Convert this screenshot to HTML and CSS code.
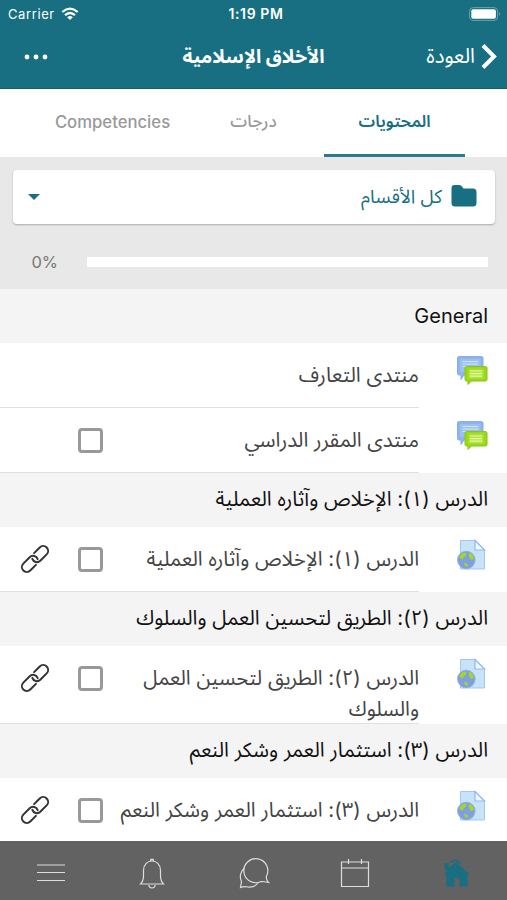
FILE: index.html
```html
<!DOCTYPE html>
<html lang="ar" dir="rtl">
<head>
<meta charset="utf-8">
<meta name="viewport" content="width=device-width, initial-scale=1">
<title>الأخلاق الإسلامية</title>
<link rel="stylesheet" href="styles.css">
</head>
<body>
<svg width="0" height="0" class="defs" aria-hidden="true">
  <defs>
    <symbol id="forum" viewBox="0 0 32 32">
      <path d="M3 1.500H25.500Q27 1.500 27 3V18.500Q27 20 25.500 20H8L5 24.500V20H3Q1.500 20 1.500 18.500V3Q1.500 1.500 3 1.500Z" fill="#8db4ed" stroke="#86aee9"/>
      <path d="M4 4H24.500V17H4Z" fill="#9dc0f3"/>
      <path d="M6.500 6.500H22M6.500 9H22M6.500 11.500H22" stroke="#d5e6ff" stroke-width="1.200"/>
      <path d="M10.500 11.500H29.500Q31 11.500 31 13V24.500Q31 26 29.500 26H15.500L12 29.500V26H10.500Q9 26 9 24.500V13Q9 11.500 10.500 11.500Z" fill="#9bd818" stroke="#84c61b"/>
      <path d="M12.500 14H27.500V23.500H12.500Z" fill="#b4e341" stroke="#a6dd26"/>
      <path d="M14 16H26M14 18.600H26M14 21.200H26" stroke="#e4f7a8" stroke-width="1.200"/>
    </symbol>
    <symbol id="webpage" viewBox="0 0 32 32">
      <path d="M4.500 1.500H19L28.500 11V30H4.500Z" fill="#c8e2fa" stroke="#a4c6f5"/>
      <path d="M19 1.500V11H28.500Z" fill="#f0f8ff" stroke="#92b8f2" stroke-width="1.200"/>
      <circle cx="10.300" cy="21" r="8.900" fill="#7e9fe0" stroke="#96afe3" stroke-width=".6"/>
      <path d="M3.500 17.500Q6.500 12.500 10.500 14L9.500 17L7.500 18.500L7 20.500L4 19.500ZM13 13.500L16.500 15.500L18 20L15 21L13 18ZM8 23.500L12 25L11.500 28L9 27Z" fill="#a6d91d"/>
    </symbol>
    <symbol id="link" viewBox="0 0 32 32">
      <g transform="rotate(-45 16 16)" fill="none" stroke="currentColor" stroke-width="2" stroke-linecap="round">
        <path d="M12.500 20.800H4.500A4.900 4.900 0 0 1 4.500 11H13.500A4.900 4.900 0 0 1 17.800 18"/>
        <path d="M19.500 11.200H27.500A4.900 4.900 0 0 1 27.500 21H18.500A4.900 4.900 0 0 1 14.200 14"/>
      </g>
    </symbol>
  </defs>
</svg>
<header class="top">
  <div class="status" dir="ltr">
    <span class="carrier">Carrier
      <svg width="18" height="14" viewBox="0 0 18 14"><g fill="none" stroke="#fff" stroke-width="2.200"><path d="M1.300 5Q9-1.800 16.700 5"/><path d="M4 8.200Q9 3.800 14 8.200"/></g><path d="M6.200 10.200Q9 7.900 11.800 10.200L9 13Z" fill="#fff"/></svg>
    </span>
    <span class="time">1:19 PM</span>
    <svg class="battery" width="32" height="14" viewBox="0 0 32 14"><rect x=".6" y=".6" width="28" height="12.800" rx="3.600" fill="none" stroke="#6ba3ad"/><rect x="2.300" y="2.300" width="24.600" height="9.400" rx="2" fill="#fff"/><path d="M30 5Q32 7 30 9Z" fill="#6ba3ad"/></svg>
  </div>
  <nav class="titlebar">
    <div class="back"><svg width="17" height="27" viewBox="0 0 17 27"><path d="M2 2.500L13 13.500L2 24.500" fill="none" stroke="#fff" stroke-width="4"/></svg><span>العودة</span></div>
    <h1>الأخلاق الإسلامية</h1>
    <svg class="more" width="24" height="6" viewBox="0 0 24 6" fill="#fff"><circle cx="3" cy="3" r="2.400"/><circle cx="12" cy="3" r="2.400"/><circle cx="21" cy="3" r="2.400"/></svg>
  </nav>
</header>
<nav class="tabs">
  <span class="tab active">المحتويات</span>
  <span class="tab">درجات</span>
  <span class="tab latin">Competencies</span>
</nav>
<section class="controls">
  <div class="select">
    <svg width="26" height="22" viewBox="0 0 26 22"><path d="M3.500 0H8.500Q10 0 11 1.500L12.500 3.500H22Q25.500 3.500 25.500 7V18Q25.500 21.500 22 21.500H4Q.5 21.500 .5 18V3Q.5 0 3.500 0Z" fill="#176f81"/></svg>
    <span class="select-label">كل الأقسام</span>
    <i class="caret"></i>
  </div>
  <div class="progress"><div class="track"></div><span class="percent" dir="ltr">0%</span></div>
</section>
<main>
  <h2 class="latin">General</h2>
  <div class="row"><svg class="mod"><use href="#forum"/></svg><div class="cell"><p class="wide">منتدى التعارف</p></div></div>
  <div class="row"><svg class="mod"><use href="#forum"/></svg><div class="cell"><p>منتدى المقرر الدراسي</p><i class="check"></i></div></div>
  <h2>الدرس (١): الإخلاص وآثاره العملية</h2>
  <div class="row"><svg class="mod"><use href="#webpage"/></svg><div class="cell"><p>الدرس (١): الإخلاص وآثاره العملية</p><i class="check"></i><svg class="link"><use href="#link"/></svg></div></div>
  <h2>الدرس (٢): الطريق لتحسين العمل والسلوك</h2>
  <div class="row tall"><svg class="mod"><use href="#webpage"/></svg><div class="cell"><p>الدرس (٢): الطريق لتحسين العمل<br>والسلوك</p><i class="check"></i><svg class="link"><use href="#link"/></svg></div></div>
  <h2>الدرس (٣): استثمار العمر وشكر النعم</h2>
  <div class="row last"><svg class="mod"><use href="#webpage"/></svg><div class="cell"><p>الدرس (٣): استثمار العمر وشكر النعم</p><i class="check"></i><svg class="link"><use href="#link"/></svg></div></div>
</main>
<footer class="tabbar">
  <svg viewBox="0 0 32 32" class="home"><path d="M16 5L29 17L27.500 18.500V29.500H19.500V21H14.500V29.500H6.500V18.500L4 17.500L7 13.500L4.500 12V6H8.500V11Z"/><path d="M10.500 5.500L14.500 3L18 4.500L21 7" class="smoke"/></svg>
  <svg viewBox="0 0 32 32"><path d="M2.500 5H29.500V29.500H2.500ZM2.500 11H29.500M9.500 2V7M22.500 2V7"/></svg>
  <svg viewBox="0 0 32 32"><path d="M28.300 19.500A12 12 0 1 0 23 24.500Q26 24.600 30.500 25.500Q28 23 28.300 19.500Z"/><path d="M6.500 11A11 11 0 0 0 3.500 24.500L2.500 30.500Q6 29 10 30Q16 31 20 26"/></svg>
  <svg viewBox="0 0 32 32"><path d="M4.500 27H27.500Q24.500 24 24.500 19V13A8.500 9 0 0 0 7.500 13V19Q7.500 24 4.500 27ZM14.500 4V3Q16 1.500 17.500 3V4M12.800 28Q13.300 31 16 31T19.200 28"/></svg>
  <svg viewBox="0 0 32 32"><path d="M2 8H30M2 15.500H30M2 23.500H30"/></svg>
</footer>
</body>
</html>
```
FILE: styles.css
```css
* { box-sizing: border-box; }
body { margin: 0; width: 507px; height: 900px; overflow: hidden; background: #fff; font-family: Inter, "Noto Sans Arabic", "Noto Sans", "DejaVu Sans", sans-serif; display: flex; flex-direction: column; }
svg { display: block; flex: none; }
.defs { position: absolute; }
.top { height: 89px; background: #176f81; color: #fff; border-bottom: 1px solid #126071; }
.status { height: 27px; padding: 0 6px 0 8px; display: grid; grid-template-columns: 1fr auto 1fr; align-items: center; font-size: 13px; }
.carrier { display: flex; gap: 6px; align-items: center; letter-spacing: 0.6px; }
.time { font-weight: 600; font-size: 14px; letter-spacing: 0.6px; padding-left: 3px; }
.battery { justify-self: end; }
.titlebar { height: 58px; display: grid; grid-template-columns: 1fr auto 1fr; align-items: center; padding: 0 9px; }
.back { display: flex; align-items: center; gap: 6px; font-size: 20.5px; }
h1 { margin: 0; font-size: 19.3px; font-weight: 700; }
.more { justify-self: end; margin: 2px 0 0 15px; }
.tabs { height: 68px; display: flex; padding: 0 42px; justify-content: space-between; }
.tab { width: 141px; height: 68px; display: flex; align-items: center; justify-content: center; color: #999; font-size: 17px; font-weight: 500; padding-bottom: 2px; }
.tab.latin { font-size: 16.7px; padding-bottom: 2px; }
.tab.active { color: #176f81; border-bottom: 3px solid #2c7b8a; font-weight: 600; font-size: 16.6px; padding-bottom: 0; }
.controls { height: 132px; background: #e8e8e8; padding: 13px 12px 0 13px; }
.select { height: 54px; background: #fff; border-radius: 4px; box-shadow: 0 1px 2px #aaa; padding: 0 18px 0 15px; display: flex; align-items: center; color: #176f81; font-size: 18.8px; }
.select svg { margin-top: -3px; }
.select-label { margin-right: 9px; }
.caret { margin-right: auto; border: 6.5px solid transparent; border-top-color: #176f81; border-bottom: 0; margin-top: -1px; }
.progress { height: 76px; display: flex; align-items: center; padding-right: 7px; font-size: 16px; color: #777; }
.percent { font-size: 16.5px; }
.track { width: 401px; height: 10px; background: #fff; margin-left: 29px; }
h2 { margin: 0; height: 54px; background: #f4f4f4; padding: 0 19px 2px; font-size: 20.4px; font-weight: 430; color: #111; display: flex; align-items: center; white-space: nowrap; }
h2.latin { font-size: 20px; font-weight: 400; padding-bottom: 0; }
.row { height: 65px; display: flex; padding-right: 19px; }
.mod { margin: 12px 0 0; width: 32px; height: 32px; }
.cell { flex: 1; margin-right: 37px; border-bottom: 1px solid #e0e0e0; display: flex; align-items: flex-start; position: relative; color: #444; font-size: 20.4px; }
.cell p { margin: 16px 0 0; line-height: 31px; flex: 1; white-space: nowrap; }
.cell .wide { font-size: 20.7px; }
.check { width: 25px; height: 25px; border: 3px solid #999; border-radius: 4px; margin: 20px 0 0 78px; }
.link { width: 32px; height: 32px; color: #333; position: absolute; left: 19px; top: 16px; }
.tall { height: 78px; }
.last { height: 63px; }
.last .cell { border-bottom: 0; }
main { height: 552px; overflow: hidden; }
.tabbar { height: 59px; background: #626262; display: flex; justify-content: space-around; align-items: center; padding-top: 5px; }
.tabbar svg { width: 32px; height: 32px; fill: none; stroke: #ddd; stroke-width: 1.2; }
.tabbar .home { fill: #176f81; stroke: none; }
.home .smoke { fill: none; stroke: #176f81; stroke-width: 1.5; }
```
